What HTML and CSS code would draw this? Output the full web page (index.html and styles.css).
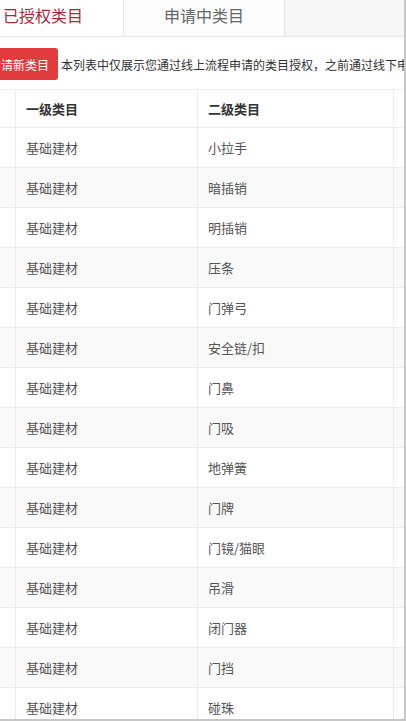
FILE: index.html
```
<!DOCTYPE html>
<html lang="zh-CN">
<head>
  <meta charset="UTF-8">
  <meta name="viewport" content="width=device-width, initial-scale=1.0">
  <title>类目授权</title>
  <link rel="stylesheet" href="styles.css">
</head>
<body>
<div class="frame">
  <div class="page">
    <!-- 标签页 -->
    <div class="tabs">
      <div class="tab active">已授权类目</div>
      <div class="tab">申请中类目</div>
      <div class="tab-rest"></div>
    </div>

    <div class="notice">
      <button class="apply-button">申请新类目</button>
      <span class="notice-text">本列表中仅展示您通过线上流程申请的类目授权，之前通过线下申请的类目请联系运营</span>
    </div>

    <table class="category-table">
      <thead>
        <tr>
          <th class="col-no">序号</th>
          <th class="col-first">一级类目</th>
          <th class="col-second">二级类目</th>
          <th class="col-more">操作</th>
        </tr>
      </thead>
      <tbody id="category-body">
        <!-- 类目行由脚本生成 -->
      </tbody>
    </table>
  </div>
</div>

<script>
  // 二级类目列表
  const subCategories = ['小拉手', '暗插销', '明插销', '压条', '门弹弓', '安全链/扣', '门鼻', '门吸', '地弹簧', '门牌', '门镜/猫眼', '吊滑', '闭门器', '门挡', '碰珠'];

  const tbody = document.getElementById('category-body');
  subCategories.forEach((name, index) => {
    const tr = document.createElement('tr');
    tr.innerHTML = `
      <td class="col-no">${index + 1}</td>
      <td class="col-first">基础建材</td>
      <td class="col-second">${name}</td>
      <td class="col-more"></td>
    `;
    tbody.appendChild(tr);
  });
</script>
</body>
</html>
```

FILE: styles.css
```
body {
  margin: 0;
  font-family: "Microsoft YaHei", "Noto Sans CJK SC", "Liberation Sans", sans-serif;
  color: #555555;
  background-color: #ffffff;
}

.frame {
  width: 404px;
  height: 719px;
  overflow: hidden;
  border-right: 2px solid #c6c6c6;
  border-bottom: 2px solid #c6c6c6;
}

.page {
  margin-left: -37px;
  width: 460px;
}

.tabs {
  display: flex;
  height: 36px;
  border-bottom: 1px solid #e8e8e8;
}

.tab {
  width: 160px;
  line-height: 30px;
  text-align: center;
  font-size: 16px;
  color: #666666;
  background-color: #fdfdfd;
  border-right: 1px solid #e6e6e6;
}

.tab.active {
  color: #a82a38;
  background-color: #ffffff;
}

.tab-rest {
  flex-grow: 1;
  background-color: #f6f6f6;
}

.notice {
  display: flex;
  align-items: center;
  gap: 3px;
  margin-top: 11px;
  padding-left: 16px;
  white-space: nowrap;
}

.apply-button {
  height: 32px;
  padding: 0 9px 0 10px;
  border: none;
  border-radius: 3px;
  background-color: #e23b3d;
  color: #ffffff;
  font-family: inherit;
  font-size: 12px;
}

.notice-text {
  font-size: 12px;
  color: #333333;
}

.category-table {
  margin-top: 9px;
  border-collapse: collapse;
  table-layout: fixed;
  width: 448px;
  font-size: 13px;
}

.category-table th,
.category-table td {
  height: 39px;
  padding: 0 10px;
  text-align: left;
  border: 1px solid #ececec;
  white-space: nowrap;
  overflow: hidden;
}

.category-table th {
  height: 37px;
  font-weight: bold;
  color: #333333;
}

.category-table tbody tr:nth-child(even) {
  background-color: #f9f9f9;
}

.col-no {
  width: 31px;
  color: #4a90d9;
}

.category-table td.col-no {
  color: #555555;
}

.col-first {
  width: 161px;
}

.col-second {
  width: 175px;
}

.col-more {
  width: 20px;
}
```
